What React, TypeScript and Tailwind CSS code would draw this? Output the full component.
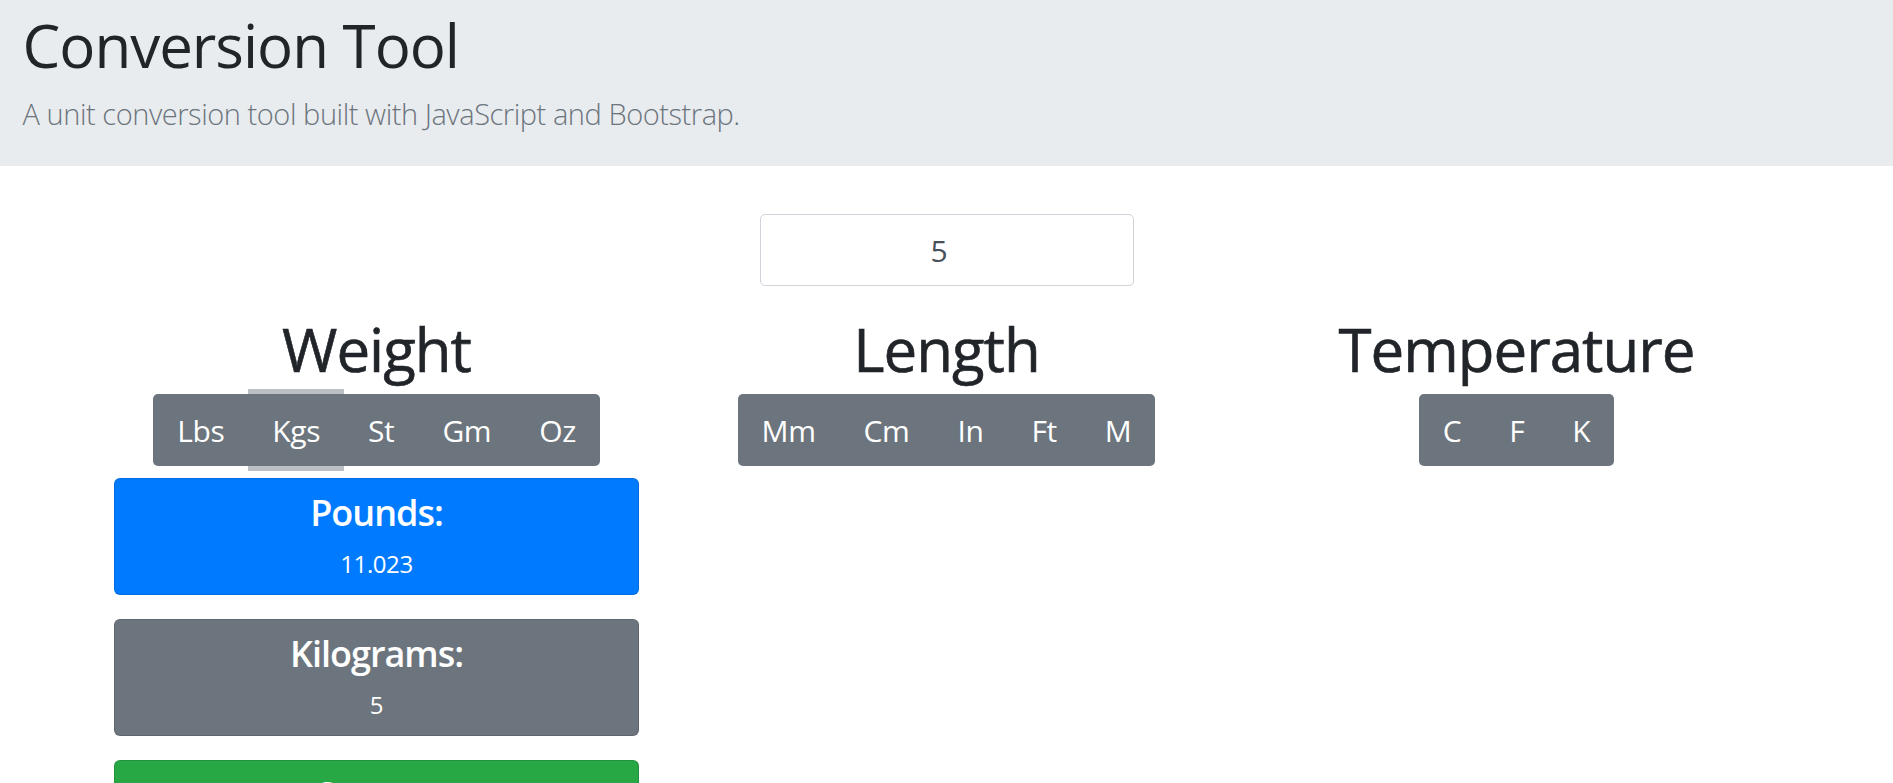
import React from 'react';

const weightUnits = ['Lbs', 'Kgs', 'St', 'Gm', 'Oz'];
const lengthUnits = ['Mm', 'Cm', 'In', 'Ft', 'M'];
const tempUnits = ['C', 'F', 'K'];

const results = [
  { label: 'Pounds:', value: '11.023', bg: 'bg-[#007bff]' },
  { label: 'Kilograms:', value: '5', bg: 'bg-[#6c757d]' },
  { label: 'Stones:', value: '0.787', bg: 'bg-[#28a745]' },
];

function UnitGroup({ units, active }: { units: string[]; active?: string }) {
  return (
    <div className="inline-flex h-[72px] rounded-[5px] bg-[#6c757d]">
      {units.map(u => (
        <button
          key={u}
          className={`px-[24px] text-[30px] leading-[45px] tracking-[-0.4px] text-white ${
            u === active ? 'shadow-[0_-5px_0_#bcc0c4,0_5px_0_#bcc0c4]' : ''
          }`}
        >
          {u}
        </button>
      ))}
    </div>
  );
}

function Column({ title, units, active, children }: { title: string; units: string[]; active?: string; children?: React.ReactNode }) {
  return (
    <div className="flex flex-col items-center px-[22.5px]">
      <h1 className="mt-[27px] mb-[9px] text-[60px] leading-[72px] font-normal tracking-[-1px] text-[#212529] [-webkit-text-stroke:0.6px_#212529]">
        {title}
      </h1>
      <UnitGroup units={units} active={active} />
      {children}
    </div>
  );
}

export default function App() {
  return (
    <div className="min-h-screen bg-white font-['Open_Sans',sans-serif] text-[#212529]">
      {/* Header */}
      <header className="h-[166px] bg-[#e9ecef] px-[22.5px] pt-[9px]">
        <h1 className="text-[60px] leading-[72px] font-normal tracking-[-1px] text-[#212529]">Conversion Tool</h1>
        <p className="mt-[10px] text-[29px] leading-[45px] font-light tracking-[-0.45px] text-[#6c757d]">
          A unit conversion tool built with JavaScript and Bootstrap.
        </p>
      </header>

      {/* Main */}
      <div className="mx-auto w-[1710px]">
        <div className="flex justify-center pt-[48px]">
          <input
            type="number"
            defaultValue={5}
            className="h-[72px] w-[374px] rounded-[5px] border-[1.5px] border-[#ced4da] text-center text-[30px] text-[#495057] outline-none"
          />
        </div>

        <div className="grid grid-cols-3">
          <Column title="Weight" units={weightUnits} active="Kgs">
            <div className="mt-[12px] flex w-full flex-col gap-[24px]">
              {results.map(r => (
                <div
                  key={r.label}
                  className={`${r.bg} flex flex-col items-center rounded-[6px] border-[1.5px] border-black/[0.125] py-[12px] text-white`}
                >
                  <h4 className="mb-[12px] text-[36px] leading-[43px] font-semibold tracking-[-1px]">{r.label}</h4>
                  <div className="text-[24px] leading-[36px] tracking-[-0.4px]">{r.value}</div>
                </div>
              ))}
            </div>
          </Column>
          <Column title="Length" units={lengthUnits} />
          <Column title="Temperature" units={tempUnits} />
        </div>
      </div>
    </div>
  );
}
